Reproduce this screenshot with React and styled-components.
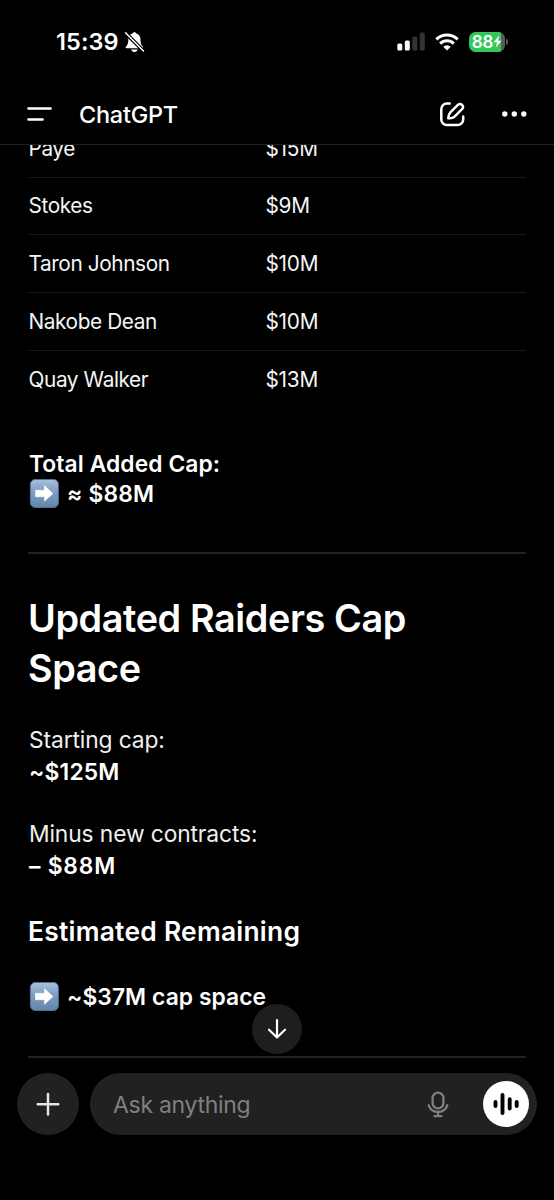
import React from "react";
import styled, { createGlobalStyle } from "styled-components";

const GlobalStyle = createGlobalStyle`
  * { box-sizing: border-box; }
  body {
    margin: 0;
    background: #000;
    color: #f5f5f5;
    font-family: Inter, "Liberation Sans", sans-serif;
    -webkit-font-smoothing: antialiased;
  }
  svg { display: block; flex: none; }
`;

const Screen = styled.div`
  position: relative;
  display: flex;
  flex-direction: column;
  width: 554px;
  height: 1200px;
  overflow: hidden;
  background: #000;
`;

const StatusBar = styled.div`
  display: flex;
  align-items: center;
  height: 83px;
  padding: 0 46px 0 56px;
`;

const Clock = styled.span`
  flex: 1;
  display: flex;
  align-items: center;
  gap: 5px;
  font-size: 23.5px;
  font-weight: 600;
  letter-spacing: 0.1px;
  color: #fff;
`;

const StatusIcons = styled.div`
  display: flex;
  align-items: center;
  gap: 10px;
`;

const Battery = styled.div`
  display: flex;
  align-items: center;
  gap: 1px;
`;

const BatteryBody = styled.div`
  display: flex;
  align-items: center;
  justify-content: center;
  width: 36px;
  height: 20px;
  border-radius: 6.5px;
  background: linear-gradient(90deg, #34c759 0 88%, #59595c 88%);
  font-size: 17px;
  font-weight: 600;
  letter-spacing: -0.2px;
  color: #fff;
`;

const BatteryCap = styled.div`
  width: 2px;
  height: 6px;
  border-radius: 0 2px 2px 0;
  background: #59595c;
`;

const Header = styled.header`
  display: flex;
  align-items: center;
  height: 62px;
  padding: 1px 27px 0;
  border-bottom: 1px solid #202020;
`;

const Title = styled.h1`
  flex: 1;
  margin: 0 0 0 27px;
  font-size: 23.5px;
  font-weight: 500;
  letter-spacing: -0.25px;
  color: #fff;
`;

const HeaderActions = styled.div`
  display: flex;
  align-items: center;
  gap: 36px;
`;

const Conversation = styled.main`
  flex: 1;
  min-height: 0;
  overflow: hidden;
  padding: 0 28px;
`;

const Contracts = styled.div`
  margin-top: -25.3px;
`;

const ContractRow = styled.div`
  display: grid;
  grid-template-columns: 237px 1fr;
  align-items: center;
  height: 57.8px;
  padding-left: 0.5px;
  border-bottom: 1px solid ${(p) => (p.$last ? "transparent" : "#191919")};
  font-size: 20.8px;
`;

const Cell = styled.span`
  letter-spacing: ${(p) => p.$spacing ?? 0}px;
`;

const Paragraph = styled.p`
  margin: ${(p) => p.$top}px 0 0;
  padding-left: 1px;
  font-size: 22.8px;
`;

const Line = styled.span`
  display: flex;
  align-items: center;
  gap: 8px;
  height: ${(p) => p.$height || 32}px;
  font-weight: ${(p) => (p.$strong ? 600 : 400)};
  letter-spacing: ${(p) => p.$spacing ?? 0}px;
  color: ${(p) => (p.$strong ? "#fff" : "#f0f0f0")};
  white-space: nowrap;
`;

const Divider = styled.hr`
  height: 2px;
  margin: ${(p) => p.$top}px 0 0;
  border: 0;
  background: #222;
`;

const SectionHeading = styled.h2`
  margin: 39px 0 0;
  font-size: 37.8px;
  font-weight: 600;
  line-height: 50px;
  letter-spacing: -0.4px;
  color: #fff;
`;

const SubHeading = styled.h3`
  margin: 33px 0 0;
  font-size: 26.4px;
  font-weight: 600;
  line-height: 32px;
  letter-spacing: 0.25px;
  color: #fff;
`;

const Composer = styled.footer`
  display: flex;
  align-items: center;
  gap: 11px;
  height: 136px;
  padding: 9px 17px 65px;
  background: #000;
`;

const AddButton = styled.button`
  display: grid;
  place-items: center;
  width: 62px;
  height: 62px;
  padding: 0;
  border: 0;
  border-radius: 50%;
  background: #212121;
`;

const InputPill = styled.div`
  flex: 1;
  display: flex;
  align-items: center;
  height: 62px;
  padding: 0 8px 0 23px;
  border-radius: 31px;
  background: #212121;
`;

const Placeholder = styled.span`
  flex: 1;
  padding-top: 1px;
  font-size: 23px;
  letter-spacing: -0.3px;
  color: #808080;
`;

const VoiceButton = styled.button`
  display: grid;
  place-items: center;
  width: 46px;
  height: 46px;
  margin-left: 34px;
  padding: 0;
  border: 0;
  border-radius: 50%;
  background: #fff;
`;

const ScrollDown = styled.button`
  position: absolute;
  left: 252px;
  top: 1004px;
  display: grid;
  place-items: center;
  width: 50px;
  height: 50px;
  padding: 0;
  border: 0;
  border-radius: 50%;
  background: #1e1e1e;
`;

const BellOff = () => (
  <svg width="21" height="22" viewBox="0 0 21 22">
    <path d="M10.4 1.3c.9 0 1.6.5 1.9 1.2 2.7.8 4.2 3 4.2 5.9 0 4.2.9 5.6 2.3 7.2.7.8.3 1.7-.8 1.7H2.8c-1.1 0-1.6-.9-.8-1.7 1.5-1.6 2.3-3 2.3-7.2 0-2.9 1.5-5.1 4.2-5.9.3-.7 1-1.2 1.9-1.2Z" fill="#fff" />
    <path d="M7.2 18.5h6.4c-.2 1.500-1.500 2.500-3.200 2.500s-3-1-3.200-2.500Z" fill="#fff" />
    <path d="M1.500 1.800 19.500 20" stroke="#000" strokeWidth="3.800" />
    <path d="M1.500 1.800 19.500 20" stroke="#fff" strokeWidth="1.500" strokeLinecap="round" />
  </svg>
);

const Signal = () => (
  <svg width="28" height="19" viewBox="0 0 28 19">
    <rect x="0.300" y="11.500" width="5" height="7" rx="1.500" fill="#fff" />
    <rect x="7.800" y="8.500" width="5" height="10" rx="1.500" fill="#fff" />
    <rect x="15.300" y="4.500" width="5" height="14" rx="1.500" fill="#333" />
    <rect x="22.800" y="0.500" width="5" height="18" rx="1.500" fill="#333" />
  </svg>
);

const Wifi = () => (
  <svg width="24" height="18" viewBox="0 0 24 18">
    <g fill="none" stroke="#fff" strokeWidth="3">
      <path d="M1.300 6.400a15.300 15.300 0 0 1 21.400 0" />
      <path d="M5.200 10.600a9.700 9.700 0 0 1 13.600 0" />
    </g>
    <path d="M12 17.500 8.300 13.800a5.300 5.300 0 0 1 7.400 0Z" fill="#fff" />
  </svg>
);

const Bolt = () => (
  <svg width="9" height="13" viewBox="0 0 9 13">
    <path d="M6.200.5.500 7.200h3.600L2.800 12.500 8.500 5.700H5Z" fill="#fff" />
  </svg>
);

const MenuIcon = () => (
  <svg width="25" height="16" viewBox="0 0 25 16">
    <path d="M1.500 2.500h22M1.500 13.500h14" stroke="#fff" strokeWidth="2.700" strokeLinecap="round" />
  </svg>
);

const ComposeIcon = () => (
  <svg width="26" height="26" viewBox="0 0 26 26" fill="none" stroke="#fff" strokeWidth="2.500" strokeLinecap="round" strokeLinejoin="round">
    <path d="M10.700 2.400H7.900a5.600 5.600 0 0 0-5.600 5.600v10.500a5.600 5.600 0 0 0 5.600 5.600H18.600a5.600 5.600 0 0 0 5.600-5.600v-3" />
    <path d="M9.200 17.200c.1-2.600.8-4.400 2.400-6l7.500-7.500a3 3 0 0 1 4.200 4.200l-7.500 7.500c-1.700 1.600-3.800 2.100-6.600 1.800Z" />
  </svg>
);

const MoreIcon = () => (
  <svg width="26" height="8" viewBox="0 0 26 8" fill="#fff">
    <circle cx="3.800" cy="4" r="2.700" />
    <circle cx="13.300" cy="4" r="2.700" />
    <circle cx="22.800" cy="4" r="2.700" />
  </svg>
);

const ArrowTile = ({ id }) => (
  <svg width="30" height="30" viewBox="0 0 30 30">
    <defs>
      <linearGradient id={id} x1="0" y1="0" x2="0" y2="1">
        <stop offset="0" stopColor="#a8c1dc" />
        <stop offset="0.450" stopColor="#7d9dc1" />
        <stop offset="1" stopColor="#6485aa" />
      </linearGradient>
    </defs>
    <rect x="1.400" y="0.500" width="28" height="28" rx="4.800" fill={`url(#${id})`} stroke="#55749a" strokeWidth="0.900" />
    <path d="M6.500 11.300h9V6.700l8.400 7.800-8.400 7.800v-4.600h-9Z" fill="#fff" stroke="#fff" strokeWidth="0.600" strokeLinejoin="round" />
  </svg>
);

const PlusIcon = () => (
  <svg width="24" height="24" viewBox="0 0 24 24">
    <path d="M12 1.900v20.600M1.700 12.200h20.600" stroke="#e6e6e6" strokeWidth="2.500" strokeLinecap="round" />
  </svg>
);

const MicIcon = () => (
  <svg width="22" height="27" viewBox="0 0 22 27" fill="none" stroke="#808080" strokeWidth="2.300" strokeLinecap="round">
    <rect x="5.600" y="1.700" width="10.800" height="15.600" rx="5.400" />
    <path d="M1.700 14.300c1.400 4 4.800 6.600 9.300 6.600s7.900-2.600 9.300-6.600M11 21v4M7.500 25.200h7" />
  </svg>
);

const VoiceIcon = () => (
  <svg width="28" height="24" viewBox="0 0 28 24" stroke="#000" strokeWidth="3.900" strokeLinecap="round">
    <path d="M3.500 9.900v4.200M10.500 3v18M17.700 7.100v9.500M24.700 9.900v4.200" />
  </svg>
);

const DownIcon = () => (
  <svg width="20" height="22" viewBox="0 0 20 22" fill="none" stroke="#fff" strokeWidth="2.200" strokeLinecap="round" strokeLinejoin="round">
    <path d="M10 2v17.500M2 11.700l8 7.800 8-7.800" />
  </svg>
);

const contracts = [
  ["Paye", "$15M"],
  ["Stokes", "$9M"],
  ["Taron Johnson", "$10M"],
  ["Nakobe Dean", "$10M"],
  ["Quay Walker", "$13M"],
];

export default function App() {
  return (
    <Screen>
      <GlobalStyle />
      <StatusBar>
        <Clock>
          15:39
          <BellOff />
        </Clock>
        <StatusIcons>
          <Signal />
          <Wifi />
          <Battery>
            <BatteryBody>
              88
              <Bolt />
            </BatteryBody>
            <BatteryCap />
          </Battery>
        </StatusIcons>
      </StatusBar>
      <Header>
        <MenuIcon />
        <Title>ChatGPT</Title>
        <HeaderActions>
          <ComposeIcon />
          <MoreIcon />
        </HeaderActions>
      </Header>
      <Conversation>
        <Contracts>
          {contracts.map(([name, value], i) => (
            <ContractRow key={name} $last={i === contracts.length - 1}>
              <Cell $spacing={-0.4}>{name}</Cell>
              <Cell $spacing={-0.25}>{value}</Cell>
            </ContractRow>
          ))}
        </Contracts>
        <Paragraph $top={40}>
          <Line $strong $height={30} $spacing={0.1}>
            Total Added Cap:
          </Line>
          <Line $strong $height={30} $spacing={0.2}>
            <ArrowTile id="tile-total" />≈ $88M
          </Line>
        </Paragraph>
        <Divider $top={43} />
        <SectionHeading>Updated Raiders Cap Space</SectionHeading>
        <Paragraph $top={31}>
          <Line $spacing={-0.12}>Starting cap:</Line>
          <Line $strong $spacing={0.2}>
            ~$125M
          </Line>
        </Paragraph>
        <Paragraph $top={30}>
          <Line $spacing={-0.12}>Minus new contracts:</Line>
          <Line $strong $spacing={0.8}>
            – $88M
          </Line>
        </Paragraph>
        <SubHeading>Estimated Remaining</SubHeading>
        <Paragraph $top={34}>
          <Line $strong $spacing={0.08}>
            <ArrowTile id="tile-remaining" />~$37M cap space
          </Line>
        </Paragraph>
        <Divider $top={43} />
      </Conversation>
      <Composer>
        <AddButton aria-label="Add">
          <PlusIcon />
        </AddButton>
        <InputPill>
          <Placeholder>Ask anything</Placeholder>
          <MicIcon />
          <VoiceButton aria-label="Voice">
            <VoiceIcon />
          </VoiceButton>
        </InputPill>
      </Composer>
      <ScrollDown aria-label="Scroll down">
        <DownIcon />
      </ScrollDown>
    </Screen>
  );
}
